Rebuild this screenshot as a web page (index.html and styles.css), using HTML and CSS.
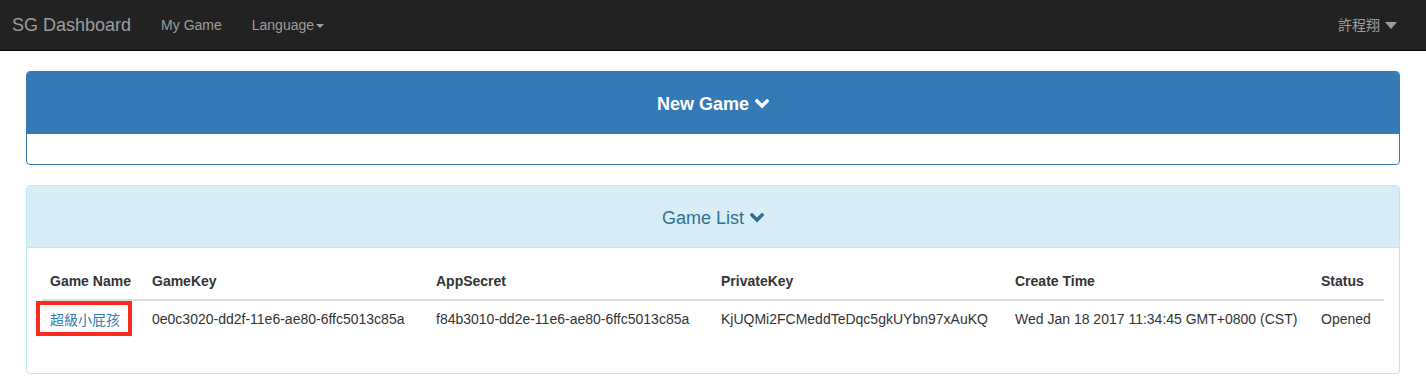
FILE: index.html
```html
<!DOCTYPE html>
<html lang="zh-TW">
<head>
    <meta charset="UTF-8">
    <title>SG Dashboard</title>
    <link rel="stylesheet" href="styles.css">
</head>
<body>
    <nav class="navbar">
        <a class="brand" href="#">SG Dashboard</a>
        <a class="nav-link" href="#">My Game</a>
        <a class="nav-link" href="#">Language<span class="caret"></span></a>
        <a class="nav-link user" href="#">許程翔 <span class="caret caret-lg"></span></a>
    </nav>

    <div class="page">
        <div class="panel panel-primary">
            <div class="panel-heading">
                <span class="panel-title">New Game
                    <svg class="chevron" viewBox="0 0 14 10" width="14" height="10"><polyline points="2,2 7,7 12,2" fill="none" stroke="currentColor" stroke-width="3.4" stroke-linecap="square"/></svg>
                </span>
            </div>
            <div class="panel-body"></div>
        </div>

        <div class="panel panel-info">
            <div class="panel-heading">
                <span class="panel-title">Game List
                    <svg class="chevron" viewBox="0 0 14 10" width="14" height="10"><polyline points="2,2 7,7 12,2" fill="none" stroke="currentColor" stroke-width="3.4" stroke-linecap="square"/></svg>
                </span>
            </div>
            <div class="panel-body">
                <table class="table">
                    <thead>
                        <tr>
                            <th class="col-name">Game Name</th>
                            <th class="col-key">GameKey</th>
                            <th class="col-secret">AppSecret</th>
                            <th class="col-private">PrivateKey</th>
                            <th class="col-time">Create Time</th>
                            <th>Status</th>
                        </tr>
                    </thead>
                    <tbody>
                        <tr>
                            <td><a class="game-link marked" href="#">超級小屁孩</a></td>
                            <td>0e0c3020-dd2f-11e6-ae80-6ffc5013c85a</td>
                            <td>f84b3010-dd2e-11e6-ae80-6ffc5013c85a</td>
                            <td>KjUQMi2FCMeddTeDqc5gkUYbn97xAuKQ</td>
                            <td>Wed Jan 18 2017 11:34:45 GMT+0800 (CST)</td>
                            <td>Opened</td>
                        </tr>
                    </tbody>
                </table>
            </div>
        </div>
    </div>
</body>
</html>
```

FILE: styles.css
```css
body {
    margin: 0;
    font-family: "Liberation Sans", Arial, "Noto Sans CJK TC", sans-serif;
    font-size: 14px;
    line-height: 20px;
    color: #333;
    background: #fff;
}

a {
    text-decoration: none;
}

.navbar {
    display: flex;
    align-items: center;
    height: 50px;
    background: #222;
    border-bottom: 1px solid #080808;
    margin-bottom: 20px;
}

.brand {
    font-size: 18px;
    color: #9d9d9d;
    padding: 0 15px 0 12px;
    line-height: 50px;
}

.nav-link {
    color: #9d9d9d;
    padding: 0 15px;
    line-height: 50px;
}

.user {
    margin-left: auto;
    padding-right: 29px;
}

.caret {
    display: inline-block;
    width: 0;
    height: 0;
    margin-left: 2px;
    vertical-align: middle;
    border-top: 4px solid #9d9d9d;
    border-left: 4px solid transparent;
    border-right: 4px solid transparent;
}

.caret-lg {
    margin-left: 1px;
    border-top-width: 7px;
    border-left-width: 6px;
    border-right-width: 6px;
    margin-top: -2px;
}

.page {
    padding: 0 26px;
}

.panel {
    margin-bottom: 20px;
    border: 1px solid transparent;
    border-radius: 4px;
    background: #fff;
}

.panel-heading {
    padding: 22px 15px 18px;
    text-align: center;
    border-bottom: 1px solid transparent;
    border-radius: 3px 3px 0 0;
}

.panel-title {
    font-size: 18px;
    line-height: 20px;
}

.chevron {
    margin-left: 1px;
    vertical-align: 1px;
}

.panel-body {
    padding: 15px;
}

.panel-primary {
    border-color: #337ab7;
}

.panel-primary .panel-heading {
    background: #337ab7;
    border-color: #337ab7;
    color: #fff;
}

.panel-primary .panel-title {
    font-weight: bold;
}

.panel-info {
    border-color: #bce8f1;
}

.panel-info .panel-heading {
    background: #d9edf7;
    border-color: #bce8f1;
    color: #31708f;
}

.table {
    width: 100%;
    border-collapse: collapse;
    margin-bottom: 20px;
}

.table th,
.table td {
    padding: 8px;
    text-align: left;
    vertical-align: top;
    white-space: nowrap;
}

.table th {
    font-weight: bold;
    border-bottom: 2px solid #ddd;
}

.table td {
    border-top: 1px solid #ddd;
}

.col-name { width: 86px; }
.col-key { width: 268px; }
.col-secret { width: 269px; }
.col-private { width: 278px; }
.col-time { width: 290px; }

.game-link {
    color: #337ab7;
    font-family: "Noto Sans CJK TC", sans-serif;
}

/* red annotation box */
.marked {
    position: relative;
}

.marked::after {
    content: "";
    position: absolute;
    left: -14px;
    right: -12px;
    top: -8px;
    bottom: -7px;
    border: 4px solid #fb2a1c;
}
```
